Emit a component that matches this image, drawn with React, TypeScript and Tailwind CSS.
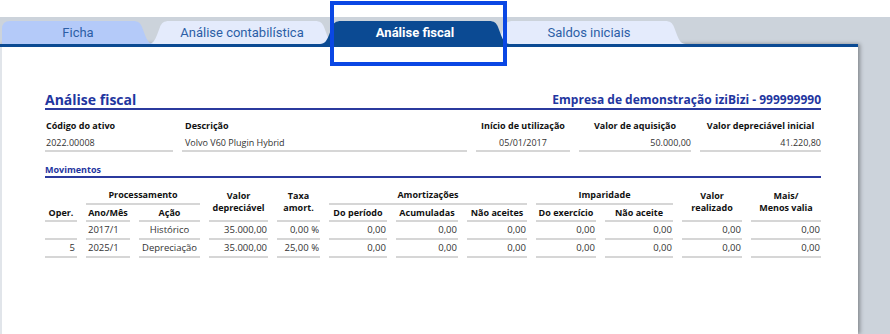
import React from "react";

function TabShape({ w, color, straightLeft }: { w: number; color: string; straightLeft?: boolean }) {
  const h = 23;
  const left = straightLeft
    ? `M0,${h} L0,8 Q0,0 8,0`
    : `M0,${h} C5,${h} 7,19 9,14 L12,6 C13.5,2 16,0 21,0`;
  const right = `L${w - 21},0 C${w - 16},0 ${w - 13.5},2 ${w - 12},6 L${w - 9},14 C${w - 7},19 ${w - 5},${h} ${w},${h} Z`;
  return (
    <svg className="absolute inset-0" width={w} height={h} viewBox={`0 0 ${w} ${h}`}>
      <path d={`${left} ${right}`} fill={color} />
    </svg>
  );
}

function Tab({
  label,
  w,
  color,
  active,
  straightLeft,
  className,
}: {
  label: string;
  w: number;
  color: string;
  active?: boolean;
  straightLeft?: boolean;
  className: string;
}) {
  return (
    <div className={`relative h-[23px] shrink-0 ${className}`} style={{ width: w }}>
      <TabShape w={w} color={color} straightLeft={straightLeft} />
      <div
        className={`relative flex h-full items-center justify-center font-['Roboto',sans-serif] text-[13px] leading-none ${
          active ? "font-bold text-white" : "text-[#2c5ea6]"
        }`}
      >
        {label}
      </div>
    </div>
  );
}

const hd = "flex items-center justify-center border-b-2 border-[#d6d6d6] font-bold text-[9px] leading-[12px] text-[#111] text-center";
const dc = "flex items-center border-b-2 border-[#d6d6d6] text-[9.5px] text-[#333] leading-none";

function Field({
  label,
  value,
  align,
  pad,
}: {
  label: string;
  value: string;
  align: "left" | "center" | "right";
  pad?: string;
}) {
  const lab = align === "left" ? "text-left" : "text-center";
  const val = align === "left" ? "text-left" : align === "center" ? "text-center" : "text-right";
  return (
    <div className="flex flex-col">
      <div className={`h-[12px] text-[9px] font-bold leading-[12px] text-[#111] ${lab} ${pad ?? ""}`}>{label}</div>
      <div className={`mt-[4px] h-[16px] border-b-2 border-[#d6d6d6] text-[9px] leading-[14px] text-[#333] ${val} ${pad ?? ""}`}>
        {value}
      </div>
    </div>
  );
}

const rows = [
  { row: "row-start-3", oper: "", ano: "2017/1", acao: "Histórico", valor: "35.000,00", taxa: "0,00 %" },
  { row: "row-start-4", oper: "5", ano: "2025/1", acao: "Depreciação", valor: "35.000,00", taxa: "25,00 %" },
];

export default function App() {
  return (
    <div className="relative h-[334px] w-[890px] overflow-hidden bg-white font-['Open_Sans',sans-serif]">
      <div className="h-[17px] bg-white" />
      <div className="flex h-[317px] flex-col bg-[#ccd3db]">
        <div className="flex h-[27px] items-end pl-[2px]">
          <Tab label="Ficha" w={152} color="#b4caf9" straightLeft className="z-[3]" />
          <Tab label="Análise contabilística" w={188} color="#e4ebfc" className="z-[2] -ml-[6px]" />
          <Tab label="Análise fiscal" w={190} color="#0b4a93" active className="z-[10] -ml-[16px]" />
          <Tab label="Saldos iniciais" w={194} color="#e4ebfc" className="z-[1] -ml-[18px]" />
        </div>
        <div className="flex flex-1 w-[858px] border-t-[3px] border-[#0b4a93] shadow-[2px_0_4px_rgba(0,0,0,0.35)]">
          <div className="w-[2px] bg-[#e1e5ea]" />
          <div className="flex-1 bg-white pl-[43px] pt-[45px]">
            <div className="w-[776px]">
              <div className="flex h-[18px] items-center justify-between border-b-2 border-[#2b3a9e] font-bold text-[#1f36a0]">
                <span className="text-[14px] leading-none">Análise fiscal</span>
                <span className="text-[12px] leading-none">Empresa de demonstração iziBizi - 999999990</span>
              </div>

              <div className="mt-[10px] grid grid-cols-[128px_285px_94px_112px_121px] gap-x-[9px]">
                <Field label="Código do ativo" value="2022.00008" align="left" pad="pl-[1px]" />
                <Field label="Descrição" value="Volvo V60 Plugin Hybrid" align="left" pad="pl-[3px]" />
                <Field label="Início de utilização" value="05/01/2017" align="center" />
                <Field label="Valor de aquisição" value="50.000,00" align="right" />
                <Field label="Valor depreciável inicial" value="41.220,80" align="right" />
              </div>

              <div className="mt-[12px] h-[14px] border-b-2 border-[#2b3a9e] text-[9px] font-bold leading-[12px] text-[#1f36a0]">
                Movimentos
              </div>

              <div className="mt-[8px] grid grid-cols-[32px_44px_61px_59px_43px_58px_62px_60px_60px_68px_60px_70px] grid-rows-[19px_17px_18px_18px] gap-x-[9px]">
                <div className={`${hd} col-start-2 col-span-2 row-start-1`}>Processamento</div>
                <div className={`${hd} col-start-4 row-start-1 row-span-2 pb-[2px]`}>Valor<br />depreciável</div>
                <div className={`${hd} col-start-5 row-start-1 row-span-2 pb-[2px]`}>Taxa<br />amort.</div>
                <div className={`${hd} col-start-6 col-span-3 row-start-1`}>Amortizações</div>
                <div className={`${hd} col-start-9 col-span-2 row-start-1`}>Imparidade</div>
                <div className={`${hd} col-start-11 row-start-1 row-span-2 pb-[2px]`}>Valor<br />realizado</div>
                <div className={`${hd} col-start-12 row-start-1 row-span-2 pb-[2px]`}>Mais/<br />Menos valia</div>

                <div className={`${hd} col-start-1 row-start-2`}>Oper.</div>
                <div className={`${hd} col-start-2 row-start-2`}>Ano/Mês</div>
                <div className={`${hd} col-start-3 row-start-2`}>Ação</div>
                <div className={`${hd} col-start-6 row-start-2`}>Do período</div>
                <div className={`${hd} col-start-7 row-start-2`}>Acumuladas</div>
                <div className={`${hd} col-start-8 row-start-2`}>Não aceites</div>
                <div className={`${hd} col-start-9 row-start-2`}>Do exercício</div>
                <div className={`${hd} col-start-10 row-start-2`}>Não aceite</div>

                {rows.map((r, i) => (
                  <React.Fragment key={i}>
                    <div className={`${dc} ${r.row} col-start-1 justify-end pr-[2px]`}>{r.oper}</div>
                    <div className={`${dc} ${r.row} col-start-2 justify-start pl-[2px]`}>{r.ano}</div>
                    <div className={`${dc} ${r.row} col-start-3 justify-center`}>{r.acao}</div>
                    <div className={`${dc} ${r.row} col-start-4 justify-end pr-[1px]`}>{r.valor}</div>
                    <div className={`${dc} ${r.row} col-start-5 justify-end pr-[1px]`}>{r.taxa}</div>
                    <div className={`${dc} ${r.row} col-start-6 justify-end pr-[1px]`}>0,00</div>
                    <div className={`${dc} ${r.row} col-start-7 justify-end pr-[1px]`}>0,00</div>
                    <div className={`${dc} ${r.row} col-start-8 justify-end pr-[1px]`}>0,00</div>
                    <div className={`${dc} ${r.row} col-start-9 justify-end pr-[1px]`}>0,00</div>
                    <div className={`${dc} ${r.row} col-start-10 justify-end pr-[1px]`}>0,00</div>
                    <div className={`${dc} ${r.row} col-start-11 justify-end pr-[1px]`}>0,00</div>
                    <div className={`${dc} ${r.row} col-start-12 justify-end pr-[1px]`}>0,00</div>
                  </React.Fragment>
                ))}
              </div>
            </div>
          </div>
        </div>
      </div>

      <div className="pointer-events-none absolute left-[330px] top-[1px] z-20 h-[65px] w-[177px] border-4 border-[#0a47e4]" />
    </div>
  );
}
